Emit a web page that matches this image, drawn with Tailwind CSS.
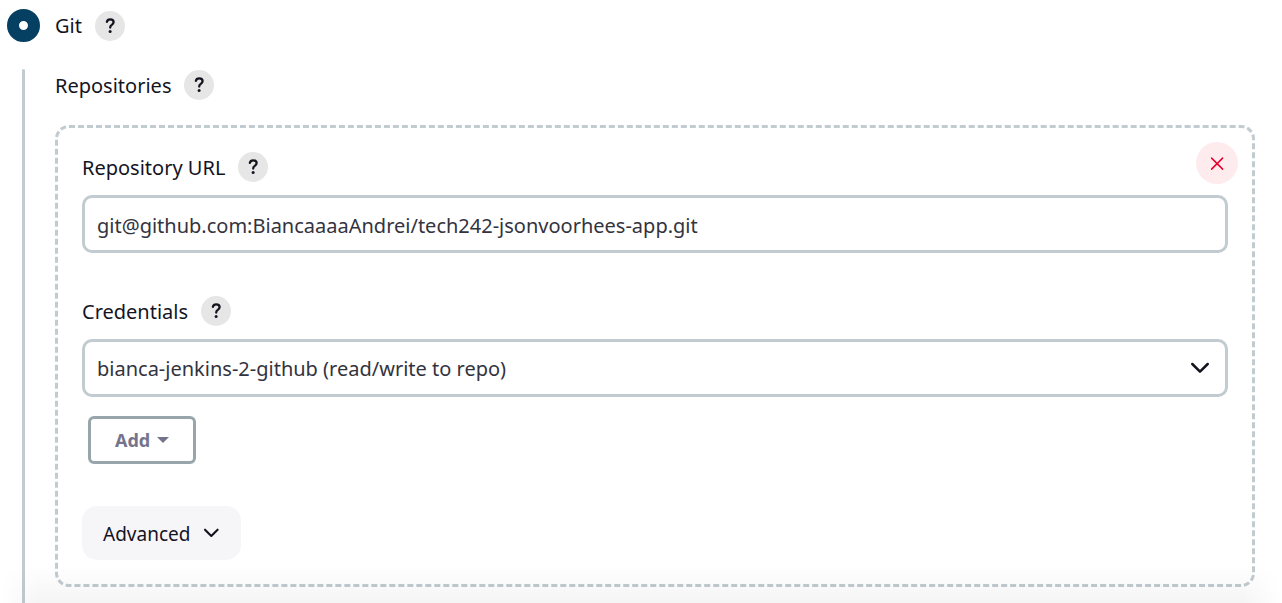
<!DOCTYPE html>
<html lang="en">
<head>
<meta charset="utf-8">
<meta name="viewport" content="width=device-width, initial-scale=1">
<title>Source Code Management</title>
<script src="https://cdn.jsdelivr.net/npm/@tailwindcss/browser@4"></script>
</head>
<body class="relative flex min-h-screen flex-col bg-white pl-[7px] pr-[27px] pt-[9px] font-['Noto_Sans',sans-serif] text-[20px] text-[#14141f]">
  <div class="flex h-[33px] items-center">
    <input id="scm-git" type="radio" name="scm" checked class="size-[33px] shrink-0 appearance-none rounded-full border-[12px] border-[#053f61] bg-white">
    <label for="scm-git" class="ml-[15px] font-normal">Git</label>
    <button type="button" aria-label="Help for Git" class="ml-[13px] flex size-[30px] items-center justify-center rounded-full bg-[#e6e6e6]">
      <svg class="size-[30px]" viewBox="0 0 30 30" fill="none" stroke="#14141f" stroke-width="2.3" stroke-linecap="round"><path d="M11.9 10.8c.3-1.6 1.5-2.5 3.3-2.5 2 0 3.4 1.1 3.4 2.8 0 1.3-.7 2-1.8 2.8-1.1.7-1.6 1.3-1.6 2.7"/><circle cx="15.1" cy="20.4" r="1.5" fill="#14141f" stroke="none"/></svg>
    </button>
  </div>

  <div class="ml-[15px] mt-[27px] flex grow">
    <div class="w-[3px] shrink-0 rounded-t-full bg-[#c2cbd0]"></div>
    <section class="ml-[30px] mt-px min-w-0 grow pb-4">
      <div class="flex h-[30px] items-center">
        <h2 class="pt-[2px] font-normal">Repositories</h2>
        <button type="button" aria-label="Help for Repositories" class="ml-[13px] flex size-[30px] items-center justify-center rounded-full bg-[#e6e6e6]">
          <svg class="size-[30px]" viewBox="0 0 30 30" fill="none" stroke="#14141f" stroke-width="2.3" stroke-linecap="round"><path d="M11.9 10.8c.3-1.6 1.5-2.5 3.3-2.5 2 0 3.4 1.1 3.4 2.8 0 1.3-.7 2-1.8 2.8-1.1.7-1.6 1.3-1.6 2.7"/><circle cx="15.1" cy="20.4" r="1.5" fill="#14141f" stroke="none"/></svg>
        </button>
      </div>

      <div class="relative mt-[25px] flex flex-col items-start rounded-[14px] border-[3px] border-dashed border-[#c2cbd0] p-6">
        <button type="button" aria-label="Delete repository" class="absolute right-[14px] top-[14px] size-[42px] rounded-full bg-[#fdebed]">
          <svg class="size-[42px]" viewBox="0 0 42 42" fill="none" stroke="#e6002e" stroke-width="1.5" stroke-linecap="round"><path d="M15.6 16.1l11 11M26.6 16.1l-11 11"/></svg>
        </button>

        <div class="flex h-[30px] items-center">
          <label for="repo-url" class="pt-[2px] font-normal">Repository URL</label>
          <button type="button" aria-label="Help for Repository URL" class="ml-[13px] flex size-[30px] items-center justify-center rounded-full bg-[#e6e6e6]">
            <svg class="size-[30px]" viewBox="0 0 30 30" fill="none" stroke="#14141f" stroke-width="2.3" stroke-linecap="round"><path d="M11.9 10.8c.3-1.6 1.5-2.5 3.3-2.5 2 0 3.4 1.1 3.4 2.8 0 1.3-.7 2-1.8 2.8-1.1.7-1.6 1.3-1.6 2.7"/><circle cx="15.1" cy="20.4" r="1.5" fill="#14141f" stroke="none"/></svg>
          </button>
        </div>
        <input id="repo-url" type="text" value="git@github.com:BiancaaaaAndrei/tech242-jsonvoorhees-app.git" class="mt-[13px] h-[58px] w-full rounded-[10px] border-[3px] border-[#c2cbd0] bg-white px-3 pt-[2px] font-normal text-[#33333e]">

        <div class="mt-[43px] flex h-[30px] items-center">
          <label for="credentials" class="pt-[2px] font-normal">Credentials</label>
          <button type="button" aria-label="Help for Credentials" class="ml-[13px] flex size-[30px] items-center justify-center rounded-full bg-[#e6e6e6]">
            <svg class="size-[30px]" viewBox="0 0 30 30" fill="none" stroke="#14141f" stroke-width="2.3" stroke-linecap="round"><path d="M11.9 10.8c.3-1.6 1.5-2.5 3.3-2.5 2 0 3.4 1.1 3.4 2.8 0 1.3-.7 2-1.8 2.8-1.1.7-1.6 1.3-1.6 2.7"/><circle cx="15.1" cy="20.4" r="1.5" fill="#14141f" stroke="none"/></svg>
          </button>
        </div>
        <div class="relative mt-[13px] w-full">
          <select id="credentials" class="block h-[58px] w-full appearance-none rounded-[10px] border-[3px] border-[#c2cbd0] bg-white px-3 pt-[2px] font-normal text-[#33333e]">
            <option>bianca-jenkins-2-github (read/write to repo)</option>
          </select>
          <svg class="pointer-events-none absolute right-[18px] top-[19px] h-5 w-5" viewBox="0 0 20 20" fill="none" stroke="#14141f" stroke-width="2.5" stroke-linecap="round" stroke-linejoin="round"><path d="M2.3 6l7.7 7.7L17.7 6"/></svg>
        </div>

        <button type="button" class="ml-[6px] mt-[19px] flex h-12 items-center gap-[7px] rounded-[6px] border-[3px] border-[#98a5ab] bg-white px-6 text-[18px] font-bold text-[#74748c]">
          Add
          <svg class="h-[6px] w-3" viewBox="0 0 12 6" fill="currentColor"><path d="M0 0h12L6 6z"/></svg>
        </button>

        <button type="button" class="mt-[42px] flex h-[54px] items-center gap-3 rounded-[15px] bg-[#f6f6f9] px-[21px] text-[19px] font-normal">
          <span class="pt-[2px]">Advanced</span>
          <svg class="h-5 w-[18px]" viewBox="0 0 18 20" fill="none" stroke="#14141f" stroke-width="2.1" stroke-linecap="round" stroke-linejoin="round"><path d="M3 6.7l6.3 6.3 6.3-6.3"/></svg>
        </button>
      </div>
    </section>
  </div>

  <div class="pointer-events-none absolute inset-x-0 bottom-0 h-[38px] bg-linear-to-b from-black/0 to-black/4 mask-r-from-[97%] mask-l-from-[97%]"></div>
</body>
</html>
